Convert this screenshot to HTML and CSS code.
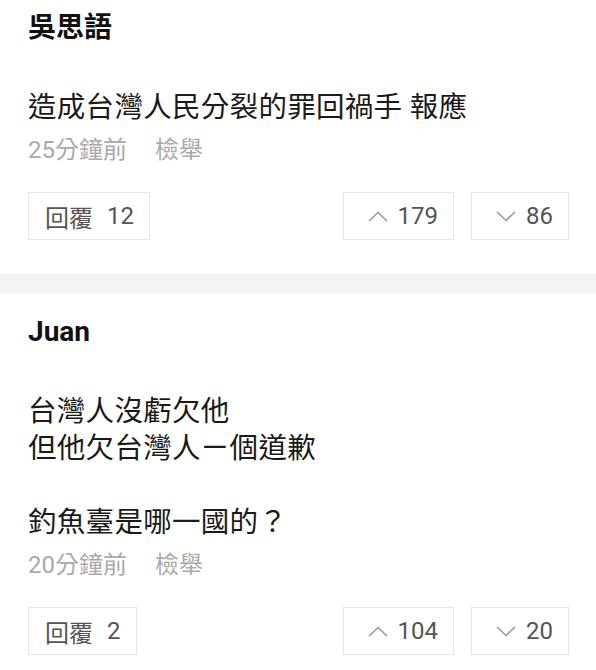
FILE: index.html
```html
<!DOCTYPE html>
<html lang="zh-Hant">
<head>
  <meta charset="UTF-8" />
  <meta name="viewport" content="width=device-width, initial-scale=1.0"/>
  <title>留言</title>
  <link rel="stylesheet" href="styles.css">
</head>
<body>
  <div class="comments">

    <!-- 留言 1 -->
    <div class="comment">
      <div class="author">吳思語</div>
      <div class="content">造成台灣人民分裂的罪回禍手 報應</div>
      <div class="meta">
        <span>25分鐘前</span>
        <span class="report">檢舉</span>
      </div>
      <div class="actions">
        <div class="btn">回覆<span class="count">12</span></div>
        <div class="votes">
          <div class="btn vote">
            <svg class="caret" width="20" height="11" viewBox="0 0 20 11"><path d="M1 10 L10 1.5 L19 10" /></svg>
            179
          </div>
          <div class="btn vote">
            <svg class="caret" width="20" height="11" viewBox="0 0 20 11"><path d="M1 1 L10 9.5 L19 1" /></svg>
            86
          </div>
        </div>
      </div>
    </div>

    <div class="divider"></div>

    <!-- 留言 2 -->
    <div class="comment">
      <div class="author">Juan</div>
      <div class="content">台灣人沒虧欠他<br>但他欠台灣人ㄧ個道歉<br><br>釣魚臺是哪一國的？</div>
      <div class="meta">
        <span>20分鐘前</span>
        <span class="report">檢舉</span>
      </div>
      <div class="actions">
        <div class="btn">回覆<span class="count">2</span></div>
        <div class="votes">
          <div class="btn vote">
            <svg class="caret" width="20" height="11" viewBox="0 0 20 11"><path d="M1 10 L10 1.5 L19 10" /></svg>
            104
          </div>
          <div class="btn vote">
            <svg class="caret" width="20" height="11" viewBox="0 0 20 11"><path d="M1 1 L10 9.5 L19 1" /></svg>
            20
          </div>
        </div>
      </div>
    </div>

  </div>
</body>
</html>
```

FILE: styles.css
```css
body {
  margin: 0;
  background: #fff;
  font-family: Roboto, "Noto Sans CJK TC", sans-serif;
  color: #1a1a1a;
}

.comment {
  padding: 18px 27px 34px 28px;
}

.comment:first-child {
  padding-top: 8px;
}

.author {
  font-size: 28px;
  font-weight: bold;
  line-height: 40px;
  color: #111;
}

.content {
  margin-top: 41px;
  font-size: 28.5px;
  letter-spacing: 0.3px;
  line-height: 37px;
}

.meta {
  margin-top: 8px;
  font-size: 24px;
  line-height: 32px;
  color: #aaa;
}

.meta .report {
  margin-left: 22px;
}

.actions {
  display: flex;
  justify-content: space-between;
  margin-top: 26px;
}

.votes {
  display: flex;
  gap: 17px;
}

.btn {
  display: flex;
  align-items: center;
  box-sizing: border-box;
  height: 48px;
  padding: 0 15px 0 16px;
  border: 1.5px solid #e6e6e6;
  font-size: 24px;
  color: #555;
}

.btn .count {
  margin-left: 14px;
}

.vote {
  padding-left: 24px;
}

.caret {
  margin-right: 10px;
  fill: none;
  stroke: #9a9a9a;
  stroke-width: 1.6;
}

.divider {
  height: 20px;
  background: #f3f4f6;
  border-top: 1px solid #eceef0;
  box-sizing: border-box;
}
```
